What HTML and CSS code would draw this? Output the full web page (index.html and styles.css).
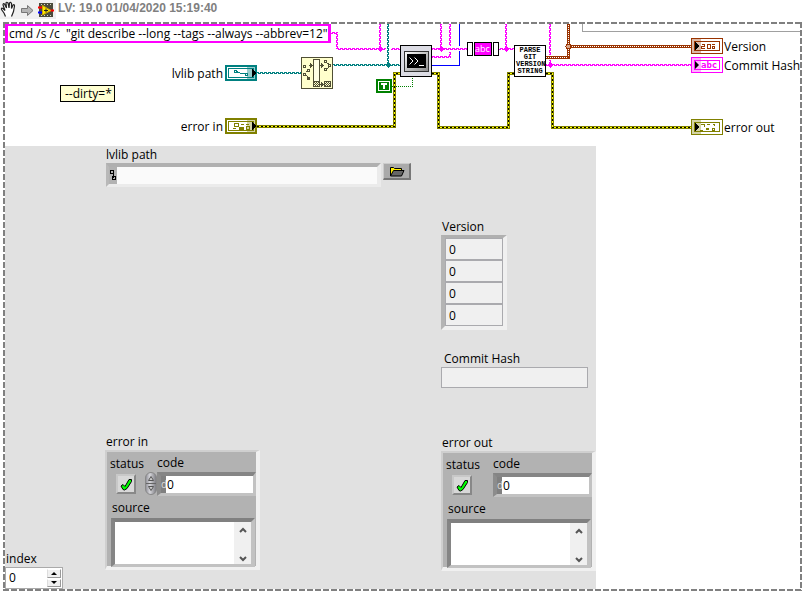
FILE: index.html
```html
<!DOCTYPE html>
<html lang="en">
<head>
<meta charset="utf-8">
<title>LabVIEW snippet</title>
<link rel="stylesheet" href="styles.css">
</head>
<body>
<header class="bar">
  <div class="tools">
    <svg width="56" height="19" viewBox="0 0 56 19" aria-hidden="true">
      <path d="M5.500 16.500L4 13 1.500 9.500Q1 7.500 3 8.500L5 10.500 3 5Q3 3 4.500 4L6.500 8 6 3Q6.500 1.500 8 3L9 8 9.500 3Q10.500 1.500 11.500 3.500L11.500 8.500 13 5Q14.500 4 14.500 6L13.500 11.500 11.500 16.500" fill="#fff" stroke="#222" stroke-width="1.2"/>
      <path d="M21.500 8.500H27.500V5.500L33 10.500 27.500 15.500V12.500H21.500Z" fill="#b5b5b5" stroke="#777"/>
      <rect x="39" y="3" width="14" height="14" fill="#4b4b3c"/>
      <path d="M41 4.500H53M41 15.500H53" stroke="#d8d8c0" stroke-dasharray="1 2"/>
      <path d="M38 7.500H43" stroke="#f00" stroke-width="2"/>
      <path d="M38 12.500H43" stroke="#00f" stroke-width="2"/>
      <path d="M49 10.500H54" stroke="#f00" stroke-width="2"/>
      <path d="M42.500 5.500L51 10.500 42.500 15Z" fill="#ffe600" stroke="#c8a800"/>
      <path d="M44 10.500H48M46 8.500V12.500" stroke="#222"/>
    </svg>
  </div>
  <span class="stamp">LV: 19.0 01/04/2020 15:19:40</span>
</header>
<main class="frame">
  <section class="diagram" aria-label="Block diagram">
    <svg class="wires" width="796" height="122" viewBox="5 24 796 122" shape-rendering="crispEdges" aria-hidden="true">
      <defs>
        <pattern id="mh" width="4" height="2" patternUnits="userSpaceOnUse"><path d="M0 .5H3M2 1.500H4M0 1.500H1" stroke="#f0f"/></pattern>
        <pattern id="mv" width="2" height="4" patternUnits="userSpaceOnUse"><path d="M.5 0V3M1.500 2V4M1.500 0V1" stroke="#f0f"/></pattern>
        <pattern id="th" width="4" height="2" patternUnits="userSpaceOnUse"><path d="M0 .5H3M2 1.500H4M0 1.500H1" stroke="#008080"/></pattern>
        <pattern id="tv" width="2" height="4" patternUnits="userSpaceOnUse"><path d="M.5 0V3M1.500 2V4M1.500 0V1" stroke="#008080"/></pattern>
        <pattern id="check" width="2" height="2" patternUnits="userSpaceOnUse"><path d="M0 .5H1M1 1.500H2" stroke="#504f35"/></pattern>
        <linearGradient id="metal" x2="1" y2="1"><stop stop-color="#fff"/><stop offset="1" stop-color="#888"/></linearGradient>
      </defs>

      <path d="M801 31.500H582.500V24" fill="none" stroke="#a0a0a0"/>

      <g fill="url(#mh)">
        <rect x="331" y="32" width="7" height="2"/>
        <rect x="337" y="48" width="49" height="2"/>
        <rect x="391" y="48" width="9" height="2"/>
        <rect x="432" y="48" width="35" height="2"/>
        <rect x="432" y="56" width="18" height="2"/>
        <rect x="499" y="48" width="15" height="2"/>
        <rect x="546" y="64" width="145" height="2"/>
      </g>
      <g fill="url(#mv)">
        <rect x="336" y="33" width="2" height="16"/>
        <rect x="379" y="24" width="2" height="25"/>
        <rect x="440" y="24" width="2" height="25"/>
        <rect x="449" y="24" width="2" height="22"/>
        <rect x="449" y="52" width="2" height="6"/>
        <rect x="505" y="24" width="2" height="25"/>
        <rect x="549" y="24" width="2" height="31"/>
        <rect x="549" y="60" width="2" height="5"/>
      </g>
      <g fill="#f0f">
        <path d="M380 46l3 3-3 3-3-3zM441 46l3 3-3 3-3-3zM506 46l3 3-3 3-3-3zM550 62l3 3-3 3-3-3z"/>
      </g>
      <path d="M432 65.500H459.500V51M459.500 46V24" fill="none" stroke="#00f"/>
      <rect x="257" y="72" width="44" height="2" fill="url(#th)"/>
      <rect x="333" y="64" width="67" height="2" fill="url(#th)"/>
      <rect x="387" y="24" width="2" height="41" fill="url(#tv)"/>
      <path d="M388 62l3 3-3 3-3-3z" fill="#008080"/>
      <path d="M392 86.500H412.500V77" fill="none" stroke="#008000" stroke-dasharray="1 1"/>

      <g fill="none">
        <path d="M546 57.500H568.500V24M568.500 46.500H691" stroke="#993300" stroke-width="3"/>
        <path d="M546 57.500H568M568.500 56V24M570 46.500H691" stroke="#fff" stroke-dasharray="1 1"/>
        <circle cx="568.500" cy="46.500" r="2.500" fill="#d9a88c" stroke="#993300"/>
        <path d="M257 126.500H394.500V73.500H400M432 73.500H438.500V127.500H508.500V73.500H514M546 73.500H552.500V127.500H691" stroke="#808000" stroke-width="3"/>
        <path d="M257 126.500H394.500V73.500H400M432 73.500H438.500V127.500H508.500V73.500H514M546 73.500H552.500V127.500H691" stroke="#ff0"/>
        <path d="M257 126.500H394.500V73.500H400M432 73.500H438.500V127.500H508.500V73.500H514M546 73.500H552.500V127.500H691" stroke="#000" stroke-dasharray="2 2"/>
      </g>

      <!-- path and error input terminals -->
      <g fill="#fff" stroke="#008080">
        <rect x="226" y="66" width="30" height="14" stroke-width="2"/>
        <rect x="228.500" y="68.500" width="25" height="9"/>
        <path d="M236 71.500H238M237 72.500L245 74" fill="none"/>
        <rect x="234.500" y="70.500" width="2" height="2"/><rect x="245.500" y="73.500" width="2" height="2"/>
      </g>
      <rect x="247" y="67" width="8" height="12" fill="#008080" fill-opacity=".4"/>
      <path d="M252 69v8l4-4z"/>
      <g fill="#fff" stroke="#808000">
        <rect x="226" y="119" width="30" height="14" stroke-width="2"/>
        <rect x="228.500" y="121.500" width="25" height="9"/>
        <path d="M234.500 123.500H238.500V126.500H234.500ZM241 124.500H244M246 124.500H249M246.500 126.500H249.500V129.500H246.500ZM233 128.500H236" fill="none"/>
        <path d="M239 127h4v2h-4z" fill="#808000"/>
      </g>
      <rect x="247" y="120" width="8" height="12" fill="#808000" fill-opacity=".35"/>
      <path d="M252 122v8l4-4z"/>

      <!-- strip path -->
      <rect x="301.500" y="57.500" width="31" height="31" fill="#ffc" stroke="#504f35"/>
      <g fill="none" stroke="#504f35">
        <rect x="313.500" y="59.500" width="6" height="22" fill="#ffffe5"/>
        <rect x="313.500" y="81.500" width="6" height="5" fill="url(#check)"/>
        <rect x="324.500" y="81.500" width="6" height="5" fill="url(#check)"/>
        <rect x="303.500" y="65.500" width="2" height="2"/><rect x="307.500" y="69.500" width="2" height="2"/><rect x="303.500" y="73.500" width="2" height="2"/>
        <rect x="324.500" y="60.500" width="2" height="2"/><rect x="328.500" y="64.500" width="2" height="2"/><rect x="324.500" y="68.500" width="2" height="2"/>
        <path d="M306 72L308 71M306 75L308 77M309 65.500H311M320 65.500H323M327 63L329 64M329 67L327 69M320 84.500H323"/>
        <path d="M307 77h3v3h-3zM310 63v5l3-2.500zM321 63v5l3-2.500zM321 82v5l3-2.500z" fill="#504f35" stroke="none"/>
      </g>

      <!-- system exec -->
      <rect x="400.500" y="45.500" width="31" height="31" fill="#dcdce4" stroke="#000"/>
      <rect x="404.500" y="51.500" width="24" height="20" fill="url(#metal)" stroke="#333"/>
      <rect x="407" y="54" width="19" height="14" fill="#000"/>
      <path d="M409.500 57.500l3.500 3.500-3.500 3.500M414.500 57.500l3.500 3.500-3.500 3.500M419 65.500H424" fill="none" stroke="#fff" shape-rendering="auto"/>

      <!-- boolean constant -->
      <rect x="376" y="79" width="16" height="14" fill="#008000"/>
      <rect x="378.500" y="81.500" width="11" height="9" fill="none" stroke="#fff"/>
      <path d="M381 83H387V85H385V89H383V85H381Z" fill="#fff"/>

      <!-- string conversion -->
      <g fill="#fff" stroke="#000">
        <rect x="467.500" y="42.500" width="5" height="13"/>
        <rect x="474.500" y="42.500" width="17" height="13" fill="#f0f"/>
        <rect x="493.500" y="42.500" width="5" height="13"/>
        <rect x="514.500" y="45.500" width="31" height="31"/>
      </g>

      <!-- output terminals -->
      <g fill="#fff" stroke="#993300">
        <rect x="691.500" y="38.500" width="31" height="15"/><rect x="694.500" y="41.500" width="25" height="9"/>
        <path d="M702 44.500H704.500V46.500H701.500V48.500H705M707.500 44.500H710.500V48.500H707.500ZM712 44.500H714.500M712.500 46.500H714.500V48.500H712.500Z" fill="none"/>
      </g>
      <rect x="692" y="39" width="9" height="14" fill="#993300" fill-opacity=".35"/>
      <path d="M695 42v8l4-4z"/>
      <g fill="#fff" stroke="#f0f">
        <rect x="691.500" y="57.500" width="31" height="15"/><rect x="694.500" y="60.500" width="25" height="9"/>
      </g>
      <g fill="#fff" stroke="#808000">
        <rect x="691.500" y="119.500" width="31" height="15"/><rect x="694.500" y="122.500" width="25" height="9"/>
        <path d="M701 124.500H704.500V127M707 124.500H710M713 124.500H714.500V126M700 130.500H703M712.500 128.500H714.500V130.500H712.500Z" fill="none"/>
        <path d="M706.500 128.500h2v1h-2z" fill="#808000"/>
      </g>
      <rect x="692" y="120" width="9" height="14" fill="#808000" fill-opacity=".35"/>
      <path d="M695 123v8l4-4z"/>
    </svg>
    <span class="node command">cmd /s /c&nbsp; "git describe --long --tags --always --abbrev=12"</span>
    <span class="node comment">--dirty=*</span>
    <span class="node n-path">lvlib path</span>
    <span class="node n-errin">error in</span>
    <span class="node n-version">Version</span>
    <span class="node n-hash">Commit Hash</span>
    <span class="node n-errout">error out</span>
    <span class="node n-abc">abc</span>
    <span class="node n-parse">PARSE<br>GIT<br>VERSION<br>STRING</span>
    <span class="node n-string">abc</span>
    <svg class="node n-arrow" width="9" height="14" viewBox="0 0 9 14" aria-hidden="true"><rect width="9" height="14" fill="#f0f" fill-opacity=".3"/><path d="M3 3v8l4-4z"/></svg>
  </section>

  <section class="panel" aria-label="Front panel">
    <div class="col index">
      <label for="index">index</label>
      <div class="spin">
        <input id="index" value="0">
        <div class="spin-keys">
          <button aria-label="Increase index"><svg width="6" height="3" viewBox="0 0 6 3"><path d="M0 3L3 0 6 3z"/></svg></button>
          <button aria-label="Decrease index"><svg width="6" height="3" viewBox="0 0 6 3"><path d="M0 0L3 3 6 0z"/></svg></button>
        </div>
      </div>
    </div>

    <div class="col inputs">
      <label for="path">lvlib path</label>
      <div class="path-row">
        <div class="path">
          <svg width="8" height="17" viewBox="0 0 8 17" shape-rendering="crispEdges" aria-hidden="true"><path d="M1.500 3.500H4.500V6.500H1.500ZM4 7V11M3.500 9.500H6.500V12.500H3.500Z" fill="none" stroke="#000"/></svg>
          <input id="path">
        </div>
        <button class="browse" aria-label="Browse">
          <svg width="16" height="11" viewBox="0 0 16 11" aria-hidden="true"><path d="M1.500 10V1.500H4.500L5.500 2.500H12.500V4.500" fill="#ffef00" stroke="#000"/><path d="M1.500 10L4.500 4.500H15L12.500 10Z" fill="#666" stroke="#000"/></svg>
        </button>
      </div>
      <div class="error">
        <label for="in-source">error in</label>
        <div class="cluster">
          <div class="pair">
            <div class="status"><span>status</span>
              <div class="led" role="img" aria-label="No error"><svg width="13" height="13" viewBox="0 0 13 13"><path d="M1 8L3 6.500 5 8.500 9 1.500 11.500 1.500 11.500 3.500 7 10.500 4.500 12 3 11.500Z" fill="#0f0" stroke="#000"/></svg></div>
            </div>
            <div class="code"><label for="in-code">code</label>
              <div class="number"><span>d</span><input id="in-code" value="0"></div>
              <svg class="knob" width="13" height="24" viewBox="0 0 13 24" aria-hidden="true"><defs><linearGradient id="k"><stop stop-color="#8c8c94"/><stop offset=".4" stop-color="#d5d5da"/><stop offset="1" stop-color="#77777d"/></linearGradient></defs><rect x=".5" y=".5" width="11" height="22" rx="5.500" fill="url(#k)" stroke="#888"/><path d="M1 11.500H11" stroke="#666"/><path d="M3.500 8.500L6 4.500 8.500 8.500ZM3.500 14.500L6 18.500 8.500 14.500Z" fill="#ccc" stroke="#555"/></svg>
            </div>
          </div>
          <label class="source-label" for="in-source">source</label>
          <div class="source"><textarea id="in-source"></textarea>
            <div class="scroll" aria-hidden="true"><svg width="8" height="6" viewBox="0 0 8 6"><path d="M1 5L4 2 7 5"/></svg><svg width="8" height="6" viewBox="0 0 8 6"><path d="M1 1L4 4 7 1"/></svg></div>
          </div>
        </div>
      </div>
    </div>

    <div class="col outputs">
      <div class="version" role="group" aria-labelledby="version">
        <span id="version">Version</span>
        <div class="array">
          <input aria-label="Version 0" value="0" readonly>
          <input aria-label="Version 1" value="0" readonly>
          <input aria-label="Version 2" value="0" readonly>
          <input aria-label="Version 3" value="0" readonly>
        </div>
      </div>
      <div class="hash">
        <label for="hash">Commit Hash</label>
        <input id="hash" readonly>
      </div>
      <div class="error">
        <label for="out-source">error out</label>
        <div class="cluster">
          <div class="pair">
            <div class="status"><span>status</span>
              <div class="led" role="img" aria-label="No error"><svg width="13" height="13" viewBox="0 0 13 13"><path d="M1 8L3 6.500 5 8.500 9 1.500 11.500 1.500 11.500 3.500 7 10.500 4.500 12 3 11.500Z" fill="#0f0" stroke="#000"/></svg></div>
            </div>
            <div class="code"><label for="out-code">code</label>
              <div class="number"><span>d</span><input id="out-code" value="0" readonly></div>
            </div>
          </div>
          <label class="source-label" for="out-source">source</label>
          <div class="source"><textarea id="out-source" readonly></textarea>
            <div class="scroll" aria-hidden="true"><svg width="8" height="6" viewBox="0 0 8 6"><path d="M1 5L4 2 7 5"/></svg><svg width="8" height="6" viewBox="0 0 8 6"><path d="M1 1L4 4 7 1"/></svg></div>
          </div>
        </div>
      </div>
    </div>
  </section>
</main>
</body>
</html>
```
FILE: styles.css
```css
* { box-sizing: border-box; }

body {
  margin: 0;
  min-height: 100vh;
  display: flex;
  flex-direction: column;
  background: #fff;
  color: #000;
  font: 12px/16px "Open Sans", "Noto Sans", sans-serif;
}

input, textarea, button {
  margin: 0;
  padding: 0;
  border: 0;
  border-radius: 0;
  font: inherit;
  color: inherit;
  min-width: 0;
}

svg { display: block; flex: none; }
label, span { display: block; }

.bar { display: flex; gap: 2px; height: 22px; }
.tools { height: 19px; background: #f0f0f0; }
.stamp {
  font: bold 12px/16px "Liberation Sans", Arial, sans-serif;
  color: #808080;
}

/* dashed frame: one gradient strip per side */
.frame {
  --x: repeating-linear-gradient(90deg, #808080 0 6px, transparent 6px 8px);
  --y: repeating-linear-gradient(180deg, #808080 0 6px, transparent 6px 8px);
  flex: 1;
  display: flex;
  flex-direction: column;
  margin: 0 3px 3px;
  padding: 2px;
  background:
    var(--x) top / 100% 2px no-repeat,
    var(--x) bottom / 100% 2px no-repeat,
    var(--y) left / 2px 100% no-repeat,
    var(--y) right / 2px 100% no-repeat;
}

.diagram { position: relative; height: 122px; overflow: hidden; }
.node { position: absolute; white-space: nowrap; }
.wires { position: absolute; left: 0; top: 0; }
.command {
  left: 0; top: 0;
  width: 326px; height: 19px;
  padding-left: 1px;
  border: solid #f0f;
  border-width: 2px 3px 2px 3px;
  background: #fff;
}
.comment {
  left: 55px; top: 61px;
  padding: 0 4px;
  width: 55px;
  border: 1px solid #000;
  background: #ffffd2;
  line-height: 15px;
}
.n-path, .n-errin { left: 100px; width: 118px; text-align: right; }
.n-path { top: 42px; }
.n-errin { top: 95px; }
.n-version { left: 719px; top: 15px; }
.n-hash { left: 719px; top: 34px; }
.n-errout { left: 719px; top: 96px; }
.n-abc { left: 470px; top: 17px; color: #fff; font-size: 9px; }
.n-parse {
  left: 511px; top: 23px;
  width: 28px;
  text-align: center;
  font: bold 7px/7px "Liberation Mono", monospace;
}
.n-string { left: 696px; top: 33px; color: #f0f; font: bold 9px/16px "DejaVu Sans Mono", monospace; }
.n-arrow { left: 687px; top: 34px; }

.panel {
  flex: 1;
  width: 74.35%;
  display: grid;
  grid-template-columns: 100px 336px 1fr;
  background: #e1e1e1;
}
.col { display: flex; flex-direction: column; min-width: 0; }

.index { justify-content: flex-end; align-items: flex-start; }
.index label { padding-left: 1px; }
.spin {
  display: flex;
  width: 58px; height: 22px;
  padding: 1px;
  border: 1px solid #aaa;
  background: #fff;
}
.spin input { flex: 1; padding-left: 2px; background: #fff; }
.spin-keys { width: 14px; display: flex; flex-direction: column; gap: 1px; }
.spin-keys button {
  flex: 1;
  display: grid;
  place-items: center;
  background: #f0f0f0;
  border: 1px solid;
  border-color: #fff #999 #999 #ddd;
}

.inputs { padding-top: 1px; }
.inputs > label { padding-left: 1px; }
.path-row { display: flex; gap: 2px; padding-left: 1px; align-items: flex-start; }
.path {
  display: flex;
  width: 275px; height: 24px;
  border: solid;
  border-width: 4px 4px 3px 3px;
  border-color: #b0b0b0 #ebebeb #ebebeb #b8b8b8;
  background: #b2b2b2;
}
.path input { flex: 1; background: #fafafa; }
.browse {
  width: 28px; height: 17px;
  display: grid;
  place-items: center;
  border: solid;
  border-width: 1px 2px 2px 1px;
  border-color: #ccc #777 #777 #ccc;
  background: #aaa;
}

.error label { padding-left: 1px; }
.inputs .error { margin-top: 247px; }
.cluster {
  width: 155px; height: 120px;
  padding: 3px 0 0 3px;
  border: solid;
  border-width: 2px 4px 4px 2px;
  border-color: #cfcfcf #f0f0f0 #f0f0f0 #cfcfcf;
  background: #b2b2b2;
}
.pair { display: flex; }
.pair label, .pair span { padding: 0; }
.status { flex: none; width: 47px; padding-top: 1px; }
.led {
  width: 20px; height: 20px;
  margin: 2px 6px 0;
  display: grid;
  place-items: center;
  border: 2px solid;
  border-color: #c8c8c8 #888 #888 #c8c8c8;
  background: #d8d8d8;
}
.code { position: relative; flex: 1; min-width: 0; }
.number {
  display: flex;
  height: 24px;
  margin-top: 1px;
  border: solid;
  border-width: 4px 3px 3px 4px;
  border-color: #858585 #c2c2c2 #c2c2c2 #8c8c8c;
  background: #808080;
}
.number span { flex: none; width: 5px; line-height: 16px; color: #ddd; font-size: 10px; }
.number input { flex: 1; padding-left: 1px; background: #fff; }
.knob { position: absolute; left: -12px; top: 17px; }
.error .source-label { padding: 4px 0 2px 2px; }
.source {
  display: flex;
  height: 49px;
  margin: 0 1px;
  border: solid;
  border-width: 4px 4px 3px 4px;
  border-color: #808080 #c2c2c2 #c2c2c2 #858585;
  background: #fff;
}
.source textarea { flex: 1; resize: none; overflow: hidden; background: #fff; }
.scroll {
  flex: none;
  width: 17px;
  padding: 5px 0 2px;
  display: flex;
  flex-direction: column;
  align-items: center;
  justify-content: space-between;
  background: #f0f0f0;
}
.scroll path { fill: none; stroke: #555; stroke-width: 2; }

.outputs { padding-top: 73px; }
.outputs .version > span { padding-left: 1px; }
.array {
  display: flex;
  flex-direction: column;
  width: 66px; height: 95px;
  border: solid;
  border-width: 3px 4px 4px 4px;
  border-color: #b0b0b0 #f0f0f0 #f0f0f0 #b4b4b4;
}
.array input {
  height: 22px;
  padding-left: 3px;
  border: 1px solid #aaaaae;
  background: #f0f0f0;
}
.hash { margin-top: 21px; }
.hash label { padding-left: 3px; }
.hash input {
  display: block;
  width: 147px; height: 21px;
  border: 1px solid #aaaaae;
  background: #f0f0f0;
}
.outputs .error { margin-top: 47px; }
```
